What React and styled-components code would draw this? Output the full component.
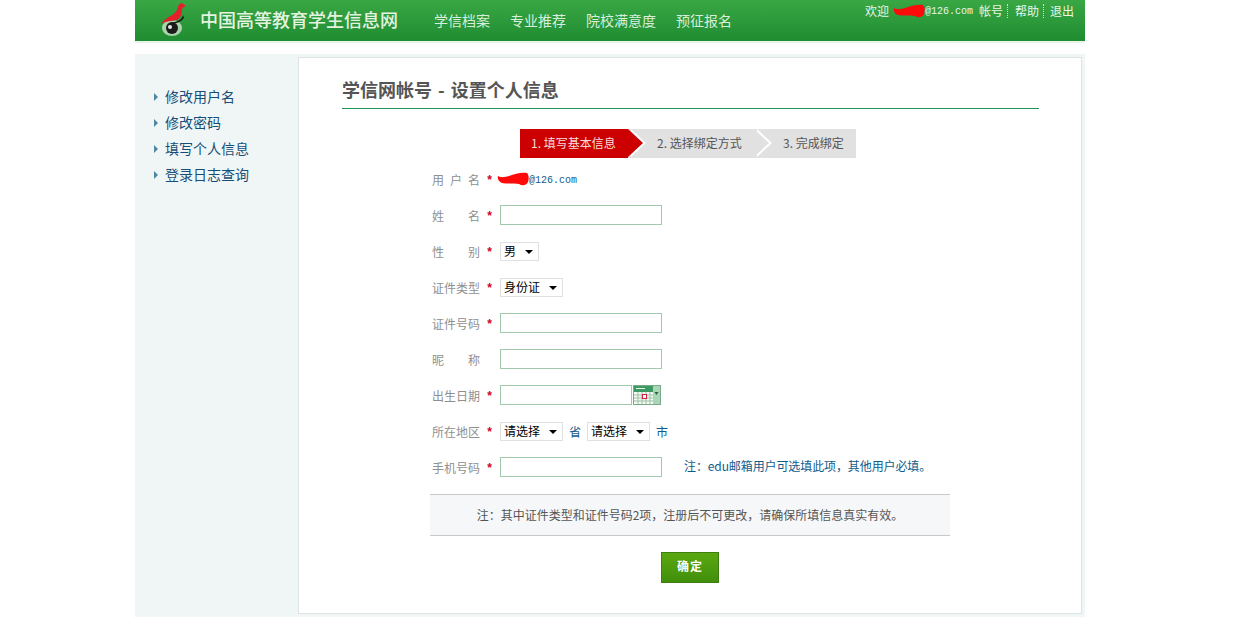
import React from 'react';
import styled, { createGlobalStyle } from 'styled-components';

const GlobalStyle = createGlobalStyle`
  html, body {
    margin: 0;
    padding: 0;
    background: #fff;
    font-family: "Noto Sans CJK SC", "Liberation Sans", sans-serif;
    font-size: 12px;
  }
  * {
    box-sizing: border-box;
  }
`;

const Wrapper = styled.div`
  width: 950px;
  margin-left: 135px;
`;

const Header = styled.div`
  height: 43px;
  border-bottom: 2px solid #e6f4ea;
  background: linear-gradient(#3aa745, #1f8c31);
  display: flex;
  align-items: flex-start;
  position: relative;
`;

const Logo = styled.svg`
  width: 32px;
  height: 36px;
  margin: 1px 9px 0 24px;
  flex: none;
`;

const Brand = styled.div`
  font-size: 18px;
  font-weight: 500;
  line-height: 39px;
  color: #e4f3e0;
  width: 234px;
  flex: none;
`;

const Nav = styled.div`
  display: flex;
  gap: 20px;
  font-size: 14px;
  line-height: 40px;
  color: #d8eeda;
`;

const UserBar = styled.div`
  margin-left: auto;
  padding: 1px 11px 0 0;
  display: flex;
  align-items: center;
  height: 20px;
  line-height: 16px;
  color: #eaf6e8;
`;

const Scribble = styled.svg`
  width: 32px;
  height: 14px;
  flex: none;
  margin-left: ${(p) => p.$left || 0}px;
`;

const Mono = styled.span`
  font-family: "Liberation Mono", monospace;
  font-size: 10px;
  padding-top: 2px;
  color: ${(p) => p.$color || 'inherit'};
`;

const BarLink = styled.span`
  margin-left: ${(p) => p.$left || 0}px;
`;

const BarDivider = styled.span`
  width: 0;
  height: 14px;
  border-left: 1px dotted #cfe8cf;
  margin: 0 ${(p) => p.$right || 6}px 0 4px;
`;

const Main = styled.div`
  margin-top: 11px;
  height: 563px;
  padding: 3px 3px 3px 0;
  background: #f0f6f6;
  display: flex;
`;

const SideMenu = styled.ul`
  width: 163px;
  flex: none;
  list-style: none;
  margin: 0;
  padding: 26px 0 0 19px;
`;

const SideItem = styled.li`
  display: flex;
  align-items: center;
  height: 26px;
  font-size: 14px;
  color: #164e78;

  &::before {
    content: '';
    border-left: 4px solid #4f86a6;
    border-top: 4px solid transparent;
    border-bottom: 4px solid transparent;
    margin: 1px 7px 0 0;
  }
`;

const Panel = styled.div`
  flex: 1;
  background: #fff;
  border: 1px solid #dce4e4;
  padding: 18px 0 0 43px;
`;

const Title = styled.h1`
  width: 697px;
  margin: 0;
  padding-bottom: 5px;
  border-bottom: 1px solid #1f9558;
  font-size: 18px;
  font-weight: 700;
  line-height: 27px;
  word-spacing: 2px;
  color: #555;
`;

const Steps = styled.div`
  display: flex;
  margin: 20px 0 0 178px;
  height: 29px;
`;

const Step = styled.div`
  position: relative;
  z-index: ${(p) => p.$layer};
  width: ${(p) => p.$width}px;
  padding-left: ${(p) => p.$pad}px;
  line-height: 28px;
  background: ${(p) => (p.$active ? '#cc0000' : '#e1e1e1')};
  color: ${(p) => (p.$active ? '#f7dcdc' : '#555')};

  ${(p) =>
    p.$arrow &&
    `
    &::before, &::after {
      content: '';
      position: absolute;
      top: 0;
      border-top: 14.5px solid transparent;
      border-bottom: 14.5px solid transparent;
    }
    &::before {
      left: calc(100% + 3px);
      border-left: 15px solid #fff;
    }
    &::after {
      left: 100%;
      border-left: 15px solid ${p.$active ? '#cc0000' : '#e1e1e1'};
    }
  `}
`;

const Form = styled.div`
  margin: 3px 0 0 90px;
`;

const Row = styled.div`
  display: flex;
  align-items: center;
  height: 36px;
`;

const Label = styled.span`
  width: 48px;
  flex: none;
  color: #8f8f8f;
  text-align: justify;
  text-align-last: justify;
`;

const Star = styled.span`
  width: 20px;
  flex: none;
  padding: 3px 0 0 6px;
  font-family: "Liberation Mono", monospace;
  font-size: 12px;
  font-weight: 700;
  color: #d40022;
`;

const TextInput = styled.input`
  width: ${(p) => p.$width || 162}px;
  height: 20px;
  padding: 0 2px;
  border: 1px solid #a3c9ac;
  background: #fff;
  outline: none;
`;

const SelectBox = styled.span`
  position: relative;
  display: inline-block;
  width: ${(p) => p.$width}px;
  height: 19px;

  &::after {
    content: '';
    position: absolute;
    right: 6px;
    top: 8px;
    border-top: 4px solid #000;
    border-left: 4px solid transparent;
    border-right: 4px solid transparent;
    pointer-events: none;
  }
`;

const Select = styled.select`
  appearance: none;
  display: block;
  width: 100%;
  height: 100%;
  padding: 0 0 2px 3px;
  border: 1px solid #e0e0e0;
  border-radius: 0;
  background: #fff;
  color: #000;
  font: inherit;
  line-height: 15px;
`;

const Unit = styled.span`
  color: #0f5c8c;
  margin: 0 ${(p) => p.$right || 0}px 0 6px;
`;

const Calendar = styled.svg`
  width: 28px;
  height: 20px;
  margin-left: 1px;
  flex: none;
`;

const Hint = styled.span`
  margin-left: 22px;
  padding-bottom: 3px;
  color: #0f5c8c;
  font-size: 12px;
  letter-spacing: -0.1px;
`;

const Footer = styled.div`
  width: 520px;
  margin: 9px 0 0 -2px;
  text-align: center;
`;

const Notice = styled.div`
  height: 42px;
  line-height: 40px;
  background: #f6f7f9;
  border-top: 1px solid #c9c9c9;
  border-bottom: 1px solid #c9c9c9;
  color: #555;
`;

const Submit = styled.button`
  display: block;
  width: 58px;
  height: 31px;
  margin: 16px auto 0;
  padding: 0 0 5px;
  border: 1px solid #3f7f12;
  background: linear-gradient(#5aa80f, #418f0b);
  color: #fff;
  font: inherit;
  font-weight: 700;
  letter-spacing: 1px;
`;

const RedMark = ({ left }) => (
  <Scribble $left={left} viewBox="0 0 32 14">
    <path
      d="M1 4 C4 6 8 5 12 4 C18 2 24 0 30 1 C32 3 32 7 31 10 C29 14 25 14 22 12 C16 11 9 12 5 11 C2 10 0 7 1 4 Z"
      fill="#ff0a0a"
    />
  </Scribble>
);

const menuItems = ['修改用户名', '修改密码', '填写个人信息', '登录日志查询'];

const App = () => {
  return (
    <Wrapper>
      <GlobalStyle />
      <Header>
        <Logo viewBox="0 0 32 36">
          <ellipse cx="13" cy="27" rx="10" ry="8" fill="#dff0dc" opacity="0.7" />
          <path d="M27 5 L23 2 C20 2 19 5 18 9 C16 14 7 16 2 23 C7 20 13 20 18 19 C22 17 23 12 23 8 C24 6 25 6 27 5 Z" fill="#e4202c" />
          <path d="M24 14 C23 19 18 21 11 22 C16 23 21 22 25 17 Z" fill="#181818" />
          <circle cx="13" cy="27" r="6" fill="#1b1b1b" />
          <circle cx="11" cy="26" r="2" fill="#e8e8e8" />
        </Logo>
        <Brand>中国高等教育学生信息网</Brand>
        <Nav>
          <span>学信档案</span>
          <span>专业推荐</span>
          <span>院校满意度</span>
          <span>预征报名</span>
        </Nav>
        <UserBar>
          <span>欢迎</span>
          <RedMark left={4} />
          <Mono>@126.com</Mono>
          <BarLink $left={6}>帐号</BarLink>
          <BarDivider $right={7} />
          <span>帮助</span>
          <BarDivider />
          <span>退出</span>
        </UserBar>
      </Header>

      <Main>
        <SideMenu>
          {menuItems.map((item) => (
            <SideItem key={item}>{item}</SideItem>
          ))}
        </SideMenu>

        <Panel>
          <Title>学信网帐号 - 设置个人信息</Title>

          <Steps>
            <Step $active $arrow $layer={3} $width={108} $pad={11}>1. 填写基本信息</Step>
            <Step $arrow $layer={2} $width={126} $pad={29}>2. 选择绑定方式</Step>
            <Step $layer={1} $width={102} $pad={29}>3. 完成绑定</Step>
          </Steps>

          <Form>
            <Row>
              <Label>用户名</Label>
              <Star>*</Star>
              <RedMark left={-3} />
              <Mono $color="#0f5c8c">@126.com</Mono>
            </Row>
            <Row>
              <Label>姓名</Label>
              <Star>*</Star>
              <TextInput />
            </Row>
            <Row>
              <Label>性别</Label>
              <Star>*</Star>
              <SelectBox $width={39}>
                <Select><option>男</option></Select>
              </SelectBox>
            </Row>
            <Row>
              <Label>证件类型</Label>
              <Star>*</Star>
              <SelectBox $width={63}>
                <Select><option>身份证</option></Select>
              </SelectBox>
            </Row>
            <Row>
              <Label>证件号码</Label>
              <Star>*</Star>
              <TextInput />
            </Row>
            <Row>
              <Label>昵称</Label>
              <Star />
              <TextInput />
            </Row>
            <Row>
              <Label>出生日期</Label>
              <Star>*</Star>
              <TextInput $width={132} />
              <Calendar viewBox="0 0 28 20">
                <rect x="0.5" y="0.5" width="27" height="19" fill="#f4faf5" stroke="#7aa98a" />
                <rect x="1" y="1" width="19" height="6" fill="#3d9a62" />
                <path d="M3 3.5h9" stroke="#e8f5ea" strokeWidth="1" />
                <path d="M1 10h19M1 13h19M1 16h19M5 7v12M9 7v12M13 7v12M17 7v12" stroke="#9dbfa5" strokeWidth="1" />
                <rect x="9.5" y="9.5" width="4" height="4" fill="#fff" stroke="#d02040" />
                <rect x="20" y="1" width="7" height="18" fill="#a9d6b6" />
                <path d="M21.5 7h4l-2 3z" fill="#2f5f3f" />
              </Calendar>
            </Row>
            <Row>
              <Label>所在地区</Label>
              <Star>*</Star>
              <SelectBox $width={63}>
                <Select><option>请选择</option></Select>
              </SelectBox>
              <Unit $right={6}>省</Unit>
              <SelectBox $width={63}>
                <Select><option>请选择</option></Select>
              </SelectBox>
              <Unit>市</Unit>
            </Row>
            <Row>
              <Label>手机号码</Label>
              <Star>*</Star>
              <TextInput />
              <Hint>注：edu邮箱用户可选填此项，其他用户必填。</Hint>
            </Row>

            <Footer>
              <Notice>注：其中证件类型和证件号码2项，注册后不可更改，请确保所填信息真实有效。</Notice>
              <Submit>确定</Submit>
            </Footer>
          </Form>
        </Panel>
      </Main>
    </Wrapper>
  );
};

export default App;
